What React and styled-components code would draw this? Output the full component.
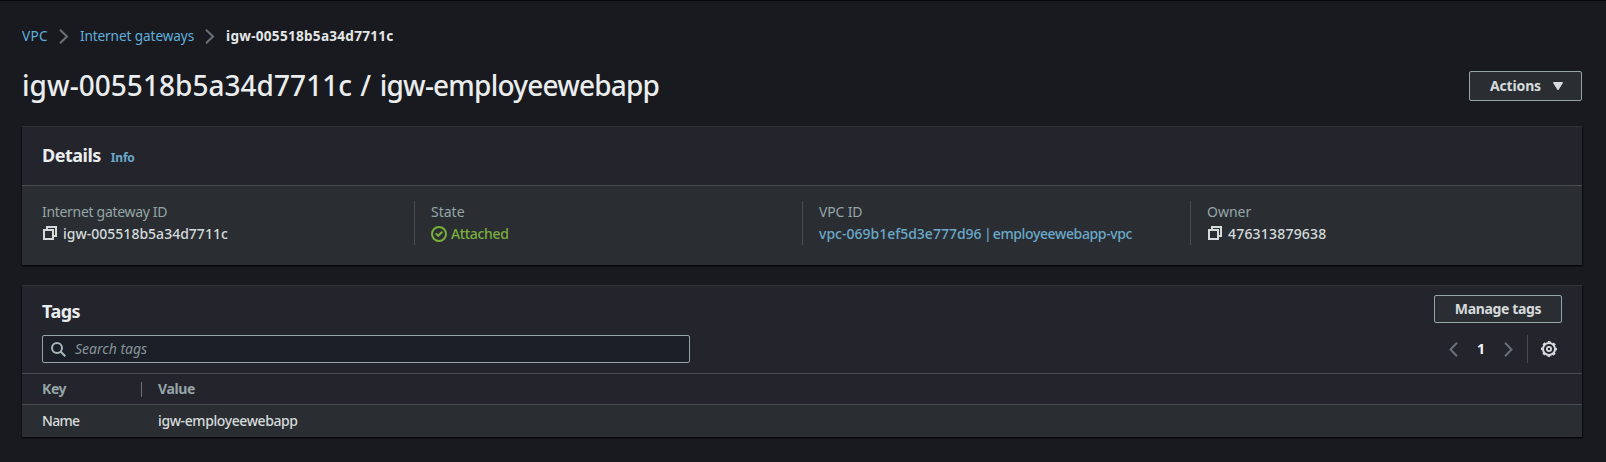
import React from "react";
import styled, { createGlobalStyle } from "styled-components";

const GlobalStyle = createGlobalStyle`
  * { box-sizing: border-box; }
  body {
    margin: 0;
    background: #191a1f;
    color: #d5dbdb;
    font-family: "Noto Sans", "Open Sans", sans-serif;
    font-size: 14px;
    line-height: 22px;
  }
`;

const Page = styled.main`
  height: 462px;
  overflow: hidden;
  border-top: 1px solid #08090c;
  padding: 24px 24px 0 22px;
`;

const Text = styled.span`
  letter-spacing: ${(p) => p.$track || 0}px;
  white-space: pre;
  font-weight: ${(p) => p.$weight || "inherit"};
`;

const Breadcrumbs = styled.nav`
  display: flex;
  align-items: center;
  height: 22px;
  font-size: 13.6px;
`;

const Crumb = styled(Text)`
  color: ${(p) => (p.$current ? "#e3e6e6" : "#5fb0dc")};
  font-weight: ${(p) => (p.$current ? 700 : 400)};
`;

const CrumbArrow = styled.svg`
  margin: 0 11px 0 11px;
`;

const TitleRow = styled.header`
  display: flex;
  align-items: center;
  justify-content: space-between;
  height: 36px;
  margin: 21px 0 22px;
`;

const PageTitle = styled.h1`
  margin: 0;
  padding-bottom: 1px;
  color: #eaeded;
  font-size: 28px;
  line-height: 33px;
  font-weight: 500;
  white-space: nowrap;
`;

const Button = styled.button`
  display: flex;
  align-items: center;
  justify-content: center;
  gap: 12px;
  width: ${(p) => p.$width}px;
  height: ${(p) => p.$height}px;
  padding: 0 0 0 ${(p) => p.$inset || 0}px;
  border: 1px solid #95a5a6;
  border-radius: 2px;
  background: #2a2e33;
  color: #d5dbdb;
  font: 700 14px/20px "Noto Sans", "Open Sans", sans-serif;
`;

const Card = styled.section`
  background: #2a2e33;
  border-top: 1px solid #303238;
  box-shadow: 0 1px 1px 0 #050608, 1px 1px 1px 0 #0e0f13, -1px 1px 1px 0 #131418;
  margin-bottom: 20px;
`;

const CardHeader = styled.div`
  background: #24242d;
  border-bottom: 1px solid #484b52;
  padding: 0 20px;
`;

const DetailsHeader = styled(CardHeader)`
  display: flex;
  align-items: baseline;
  gap: 10px;
  height: 59px;
  padding-top: 17px;
`;

const CardTitle = styled.h2`
  margin: 0;
  padding-top: ${(p) => p.$drop || 0}px;
  color: #eaeded;
  font-size: 18px;
  line-height: 22px;
  font-weight: 700;
  letter-spacing: -0.5px;
`;

const InfoLink = styled(Text)`
  color: #6aa9c9;
  font-size: 12px;
  font-weight: 700;
`;

const DetailsGrid = styled.div`
  display: grid;
  grid-template-columns: repeat(4, 1fr);
  padding: 15px 4px 20px;
`;

const Detail = styled.div`
  display: flex;
  flex-direction: column;
  height: 44px;
  padding-left: 16px;
  & + & { border-left: 1px solid #484c53; }
`;

const Label = styled(Text)`
  color: #95a5a6;
`;

const Value = styled.div`
  display: flex;
  align-items: center;
  gap: ${(p) => p.$gap || 0}px;
  color: ${(p) => p.$color || "#d5dbdb"};
  font-weight: 500;
`;

const TagsHeader = styled(CardHeader)`
  height: 88px;
  padding-top: 9px;
`;

const HeaderLine = styled.div`
  display: flex;
  align-items: center;
  justify-content: space-between;
  height: 28px;
  margin-bottom: 12px;
`;

const SearchBox = styled.label`
  display: flex;
  align-items: center;
  gap: 9px;
  width: 648px;
  height: 28px;
  padding-left: 8px;
  border: 1px solid #95a5a6;
  border-radius: 2px;
  background: #1b1f27;
`;

const SearchInput = styled.input`
  flex: 1;
  min-width: 0;
  padding: 0;
  border: 0;
  outline: 0;
  background: transparent;
  color: #d5dbdb;
  font: 14px/20px "Noto Sans", "Open Sans", sans-serif;
  &::placeholder {
    color: #87939a;
    opacity: 1;
    font-style: italic;
  }
`;

const Pager = styled.div`
  display: flex;
  align-items: center;
  height: 28px;
`;

const PageNumber = styled.span`
  width: 46px;
  text-align: center;
  color: #f5f7f7;
  font-weight: 700;
`;

const Settings = styled.div`
  display: flex;
  align-items: center;
  height: 28px;
  margin-left: 14px;
  padding: 0 5px 0 13px;
  border-left: 1px solid #484b52;
`;

const Row = styled.div`
  display: grid;
  grid-template-columns: 100px 1fr;
  align-items: center;
  height: ${(p) => (p.$head ? 31 : 32)}px;
  padding: 0 20px 0 20px;
  background: ${(p) => (p.$head ? "#24242d" : "#2a2e33")};
  border-bottom: ${(p) => (p.$head ? "1px solid #484b52" : "0")};
  color: ${(p) => (p.$head ? "#95a5a6" : "#d5dbdb")};
  font-weight: ${(p) => (p.$head ? 700 : 500)};
`;

const Cell = styled.div`
  height: 15px;
  line-height: 14px;
  border-right: ${(p) => (p.$divided ? "1px solid #6b7178" : "0")};
  padding-left: ${(p) => (p.$second ? 16 : 0)}px;
`;

const Chevron = ({ left }) => (
  <svg width="9" height="15" viewBox="0 0 9 15" fill="none" stroke="#687078" strokeWidth="2">
    <path d={left ? "M8 .8 1.5 7.5 8 14.2" : "M1 .8 7.5 7.5 1 14.2"} />
  </svg>
);

const Separator = () => (
  <CrumbArrow width="10" height="15" viewBox="0 0 10 15" fill="none" stroke="#687078" strokeWidth="2">
    <path d="M1 .7 8 7.5 1 14.3" />
  </CrumbArrow>
);

const CopyGlyph = styled.svg`
  margin: 0 0 2px 1px;
`;

const CopyIcon = () => (
  <CopyGlyph width="14" height="14" viewBox="0 0 14 14" fill="none" stroke="#d5dbdb" strokeWidth="2">
    <path d="M1 4h9v9H1zM4 3V1h9v9h-2" />
  </CopyGlyph>
);

const CheckIcon = () => (
  <svg width="16" height="16" viewBox="0 0 16 16" fill="none" stroke="#7aaf3c" strokeWidth="2">
    <circle cx="8" cy="8" r="7" />
    <path d="m4.7 7.4 2.5 2.4 4.1-4.1" />
  </svg>
);

const SearchIcon = () => (
  <svg width="15" height="15" viewBox="0 0 15 15" fill="none" stroke="#aab7b8" strokeWidth="2">
    <circle cx="6" cy="6" r="5" />
    <path d="m9.5 9.5 4.8 4.8" />
  </svg>
);

const GearIcon = () => (
  <svg width="16" height="16" viewBox="0 0 16 16" fill="none" stroke="#d5dbdb">
    <circle cx="8" cy="8" r="6" strokeWidth="2" />
    <circle cx="8" cy="8" r="7.2" strokeWidth="1.6" strokeDasharray="2.827" strokeDashoffset="1.414" />
    <circle cx="8" cy="8" r="2.1" strokeWidth="1.8" />
  </svg>
);

const Caret = () => (
  <svg width="10" height="8" viewBox="0 0 10 8" fill="#d5dbdb">
    <path d="M.5 0h9L10 .8 5.5 8h-1L0 .8z" />
  </svg>
);

export default function App() {
  return (
    <>
      <GlobalStyle />
      <Page>
        <Breadcrumbs>
          <Crumb $track={0.3}>VPC</Crumb>
          <Separator />
          <Crumb $track={-0.09}>Internet gateways</Crumb>
          <Separator />
          <Crumb $current $track={0.26}>igw-005518b5a34d7711c</Crumb>
        </Breadcrumbs>

        <TitleRow>
          <PageTitle>
            <Text $track={0.04}>igw-005518b5a34d7711c</Text>
            <Text $track={0.8}>{" / "}</Text>
            <Text $track={-0.8}>igw-employeewebapp</Text>
          </PageTitle>
          <Button $width={113} $height={30} $inset={2}>
            <Text $track={-0.15}>Actions</Text>
            <Caret />
          </Button>
        </TitleRow>

        <Card>
          <DetailsHeader>
            <CardTitle>Details</CardTitle>
            <InfoLink $track={-0.2}>Info</InfoLink>
          </DetailsHeader>
          <DetailsGrid>
            <Detail>
              <Label $track={-0.31}>Internet gateway ID</Label>
              <Value $gap={6}>
                <CopyIcon />
                <Text $track={0.01}>igw-005518b5a34d7711c</Text>
              </Value>
            </Detail>
            <Detail>
              <Label>State</Label>
              <Value $gap={4} $color="#7aaf3c">
                <CheckIcon />
                <Text $track={-0.35}>Attached</Text>
              </Value>
            </Detail>
            <Detail>
              <Label $track={-0.15}>VPC ID</Label>
              <Value $color="#6aa9c9">
                <Text>vpc-069b1ef5d3e777d96</Text>
                <Text $track={-1.3}>{" | "}</Text>
                <Text $track={-0.37}>employeewebapp-vpc</Text>
              </Value>
            </Detail>
            <Detail>
              <Label>Owner</Label>
              <Value $gap={6}>
                <CopyIcon />
                <Text $track={0.2}>476313879638</Text>
              </Value>
            </Detail>
          </DetailsGrid>
        </Card>

        <Card>
          <TagsHeader>
            <HeaderLine>
              <CardTitle $drop={4}>Tags</CardTitle>
              <Button $width={128} $height={28}>
                <Text $track={-0.35}>Manage tags</Text>
              </Button>
            </HeaderLine>
            <HeaderLine>
              <SearchBox>
                <SearchIcon />
                <SearchInput placeholder="Search tags" />
              </SearchBox>
              <Pager>
                <Chevron left />
                <PageNumber>1</PageNumber>
                <Chevron />
                <Settings>
                  <GearIcon />
                </Settings>
              </Pager>
            </HeaderLine>
          </TagsHeader>
          <Row $head>
            <Cell $divided><Text $track={-0.4}>Key</Text></Cell>
            <Cell $second><Text $track={-0.35}>Value</Text></Cell>
          </Row>
          <Row>
            <Cell><Text $track={-0.7}>Name</Text></Cell>
            <Cell $second><Text $track={-0.4}>igw-employeewebapp</Text></Cell>
          </Row>
        </Card>
      </Page>
    </>
  );
}
